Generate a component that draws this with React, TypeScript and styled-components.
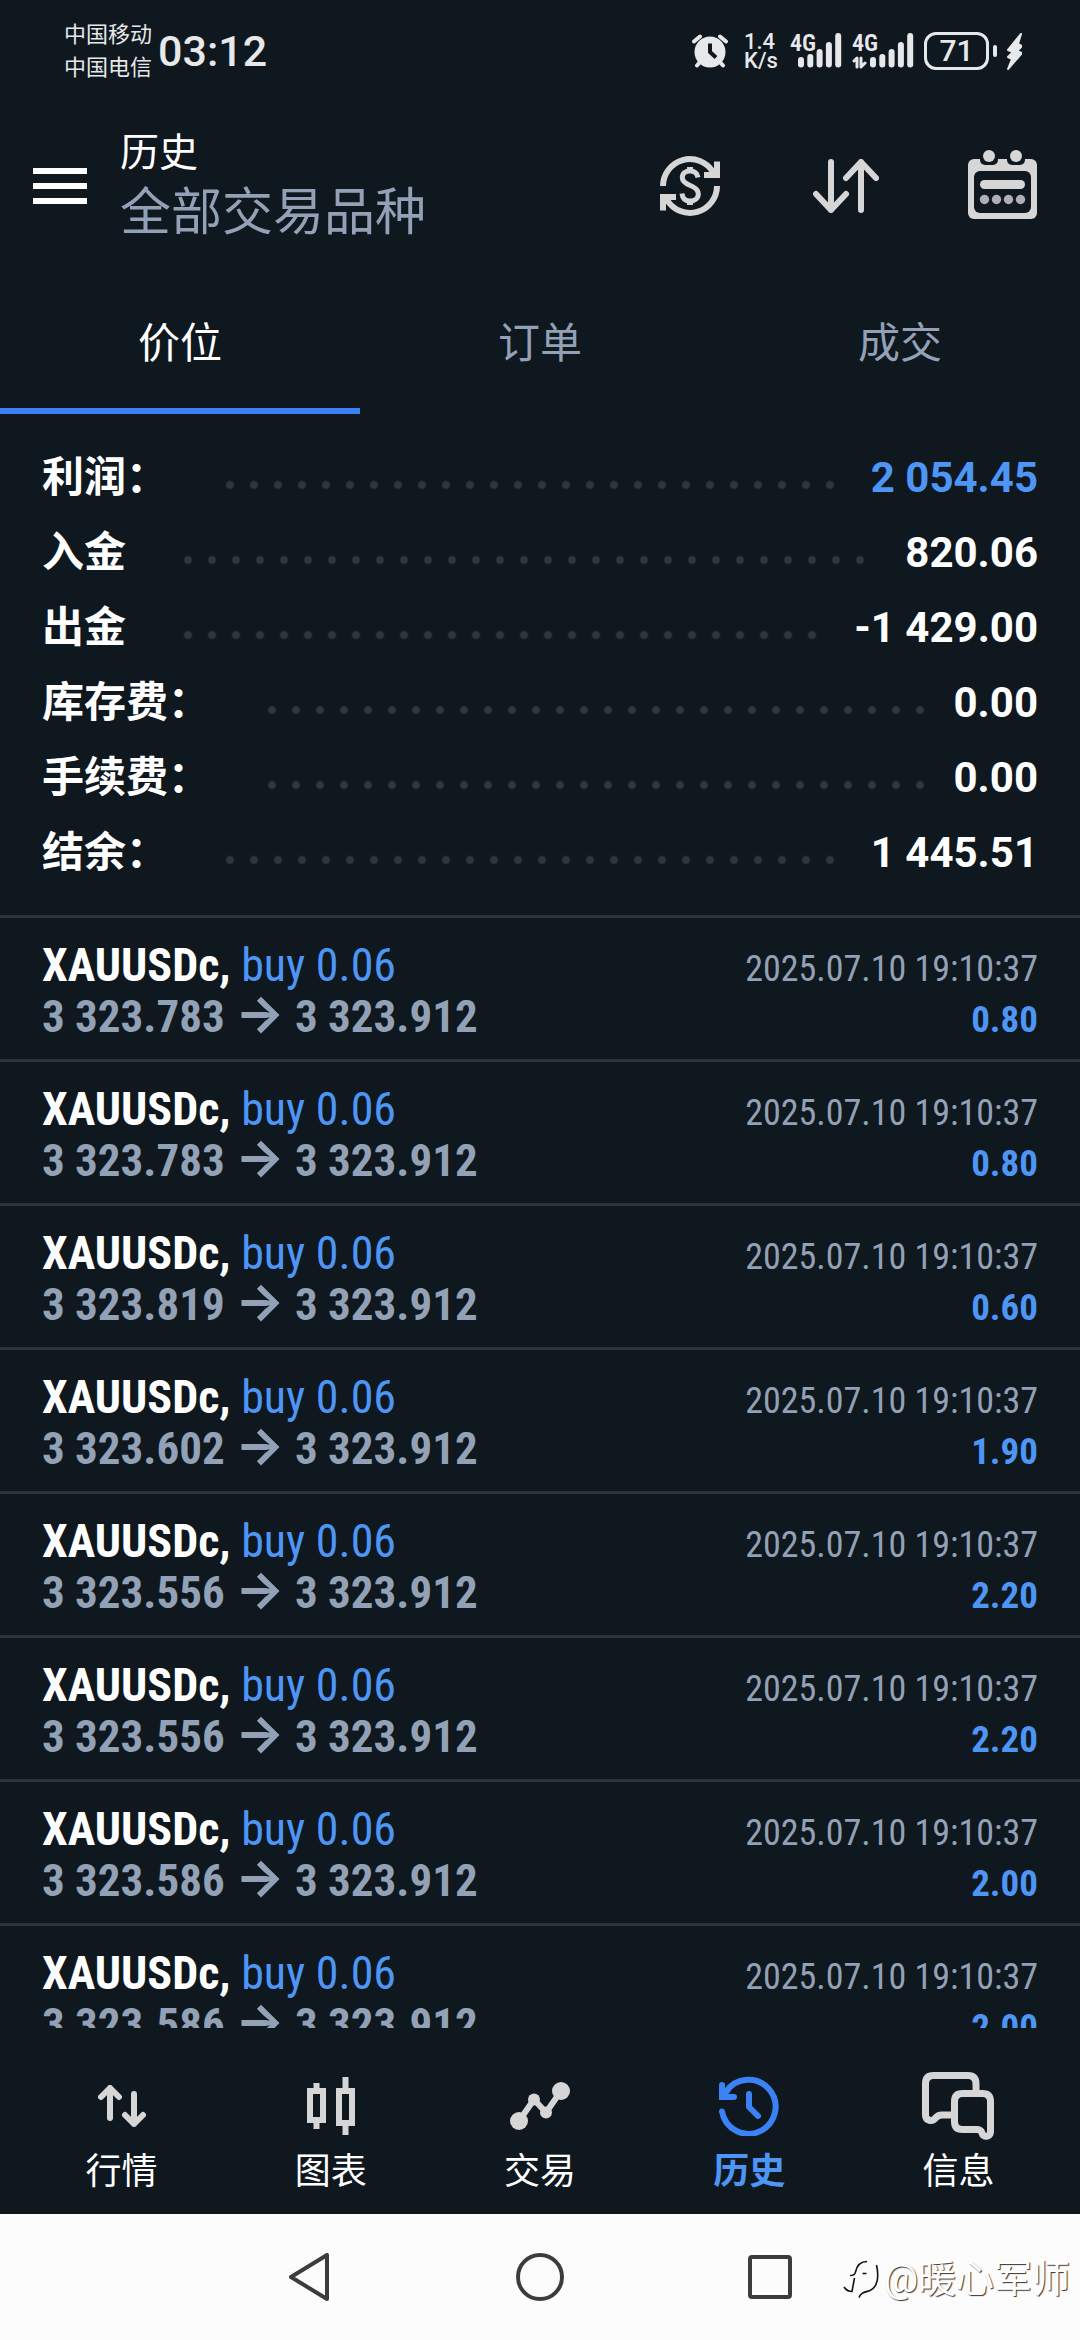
import React from "react";
import styled, { createGlobalStyle } from "styled-components";

const color = {
  bg: "#0f171f",
  line: "#2d343d",
  dot: "#2f363e",
  text: "#ffffff",
  muted: "#92a1b5",
  icon: "#d6d6d7",
  status: "#e6e8ea",
  accent: "#3b82f6",
  value: "#4d96f5",
};

const sans = `Roboto, "Noto Sans CJK SC", sans-serif`;
const condensed = `"Roboto Condensed", Roboto, "Noto Sans CJK SC", sans-serif`;

const GlobalStyle = createGlobalStyle`
  * { box-sizing: border-box; }
  body { margin: 0; background: ${color.bg}; }
  button { margin: 0; padding: 0; border: 0; background: none; color: inherit; font: inherit; cursor: pointer; }
  svg { display: block; flex: none; }
`;

const Screen = styled.div`
  display: flex;
  flex-direction: column;
  height: 100vh;
  background: ${color.bg};
  color: ${color.text};
  font-family: ${sans};
`;

/* Status bar */

const StatusBar = styled.div`
  flex: none;
  display: flex;
  align-items: center;
  justify-content: space-between;
  height: 102px;
  padding: 0 58px 0 64px;
  color: ${color.status};
`;

const StatusGroup = styled.div<{ $gap: number }>`
  display: flex;
  align-items: center;
  gap: ${(p) => p.$gap}px;
`;

const Carriers = styled.div`
  font-size: 22px;
  line-height: 33px;
`;

const Clock = styled.time`
  font-size: 43px;
  font-weight: 500;
  line-height: 54px;
`;

const AlarmBox = styled.span`
  width: 42px;
`;

const Speed = styled.div`
  width: 36px;
  font-size: 22px;
  font-weight: 500;
  line-height: 19px;
`;

const SignalBox = styled.span<{ $width: number }>`
  position: relative;
  width: ${(p) => p.$width}px;
  height: 36px;
`;

const SignalLabel = styled.span`
  position: absolute;
  top: 0;
  left: 0;
  font-family: ${condensed};
  font-size: 24px;
  font-weight: 600;
  line-height: 20px;
`;

const Battery = styled.span`
  display: flex;
  align-items: center;
  gap: 4px;
`;

const BatteryLevel = styled.span`
  width: 65px;
  height: 38px;
  border: 3px solid ${color.status};
  border-radius: 12px;
  font-size: 30px;
  font-weight: 500;
  line-height: 32px;
  text-align: center;
`;

const BatteryTip = styled.span`
  width: 4px;
  height: 12px;
  border-radius: 2px;
  background: ${color.status};
`;

/* Header */

const Header = styled.header`
  flex: none;
  display: flex;
  align-items: center;
  height: 168px;
  padding-left: 33px;
`;

const Titles = styled.div`
  flex: 1;
  padding-left: 33px;
`;

const Title = styled.h1`
  margin: 0;
  font-size: 39px;
  font-weight: 400;
  line-height: 54px;
`;

const Subtitle = styled.div`
  color: ${color.muted};
  font-size: 51px;
  line-height: 66px;
`;

const HeaderAction = styled.button`
  display: flex;
  justify-content: center;
  align-items: center;
  width: 156px;
  height: 156px;
`;

const Tabs = styled.nav`
  flex: none;
  display: grid;
  grid-template-columns: repeat(3, 1fr);
`;

const Tab = styled.button<{ $active?: boolean }>`
  height: 144px;
  border-bottom: 6px solid ${(p) => (p.$active ? color.accent : "transparent")};
  color: ${(p) => (p.$active ? color.text : color.muted)};
  font-size: 42px;
`;

/* Scrolling history */

const History = styled.main`
  flex: 1;
  min-height: 0;
  overflow-y: auto;
  scrollbar-width: none;
`;

const Summary = styled.dl`
  margin: 0;
  padding: 26px 42px 25px;
  border-bottom: 3px solid ${color.line};
  font-size: 42px;
  font-weight: 700;
  line-height: 75px;
`;

const SummaryRow = styled.div`
  display: flex;
  height: 75px;
`;

const SummaryLabel = styled.dt`
  white-space: nowrap;
`;

const Leader = styled.span`
  flex: 1;
  margin: 0 28px 0 50px;
  background: radial-gradient(circle at 12px 45px, ${color.dot} 3px, transparent 5px) 0 0 / 24px 75px repeat-x;
`;

const SummaryValue = styled.dd<{ $accent?: boolean }>`
  margin: 0;
  color: ${(p) => (p.$accent ? color.value : color.text)};
`;

const Deals = styled.ul`
  margin: 0;
  padding: 0;
  list-style: none;
  font-family: ${condensed};
`;

const Deal = styled.li`
  display: grid;
  grid-template-columns: 1fr auto;
  grid-auto-rows: 51px;
  align-items: baseline;
  padding: 22px 42px 17px;
  border-bottom: 3px solid ${color.line};
  line-height: 51px;
`;

const DealName = styled.span`
  font-size: 46px;
  font-weight: 700;
`;

const DealSide = styled.span`
  color: ${color.value};
  font-weight: 400;
`;

const DealPrices = styled.span`
  color: ${color.muted};
  font-size: 45px;
  font-weight: 700;
`;

const Arrow = styled.span`
  font-family: Inter, sans-serif;
  font-size: 52px;
  font-weight: 700;
  line-height: 0;
`;

const DealTime = styled.time`
  color: ${color.muted};
  font-size: 36px;
  text-align: right;
`;

const DealProfit = styled.span`
  color: ${color.value};
  font-size: 37px;
  font-weight: 700;
  text-align: right;
`;

/* Bottom bars */

const BottomNav = styled.nav`
  flex: none;
  display: grid;
  grid-template-columns: repeat(5, 1fr);
  padding: 42px 17px 12px;
`;

const NavItem = styled.button<{ $active?: boolean }>`
  color: ${(p) => (p.$active ? color.value : color.text)};
  font-size: 36px;
  font-weight: ${(p) => (p.$active ? 700 : 400)};
  line-height: 60px;
`;

const NavIcon = styled.span`
  display: flex;
  justify-content: center;
  align-items: center;
  height: 72px;
`;

const SystemNav = styled.footer`
  flex: none;
  position: relative;
  display: flex;
  justify-content: center;
  height: 126px;
  background: #fcfcfc;
`;

const SystemButton = styled.button`
  display: flex;
  justify-content: center;
  align-items: center;
  width: 230px;
`;

const Watermark = styled.div`
  position: absolute;
  right: 10px;
  bottom: 34px;
  display: flex;
  align-items: center;
  gap: 4px;
  color: #ffffff;
  font-size: 38px;
  line-height: 54px;
  text-shadow: 1px 1px 1px #333333;
`;

/* Icons */

const stroke = (c: string, w: number) => ({
  fill: "none",
  stroke: c,
  strokeWidth: w,
  strokeLinecap: "round" as const,
  strokeLinejoin: "round" as const,
});

const AlarmIcon = () => (
  <svg width="36" height="34" viewBox="0 0 36 34">
    <circle cx="18" cy="18" r="15.5" fill={color.status} />
    <path d="M8 28 5 31.500M28 28l3 3.500M2 7.500 8 2.500M34 7.500 28 2.500" {...stroke(color.status, 4)} />
    <path d="M18 9.500V18l6 5.500" {...stroke(color.bg, 4)} strokeLinecap="butt" />
  </svg>
);

function Signal({ data }: { data?: boolean }) {
  const x0 = data ? 18 : 8;
  const tops = [23, 20, 15, 8, -1];
  return (
    <SignalBox $width={data ? 62 : 52}>
      <svg width={data ? 62 : 52} height="36" viewBox={`0 -1 ${data ? 62 : 52} 36`}>
        {tops.map((t, i) => (
          <rect key={t} x={x0 + i * 9.3} y={t} width="6" height={33.5 - t} rx="3" fill={color.status} />
        ))}
        {data && <path d="M2 27l3-3v9M13 29l-4 4v-9" {...stroke(color.status, 3)} />}
      </svg>
      <SignalLabel>4G</SignalLabel>
    </SignalBox>
  );
}

const BoltIcon = () => (
  <svg width="15" height="37" viewBox="0 0 15 37">
    <path d="M14 1 1 17l5 2-5 5 4 2-4 10L15 20l-5-2 5-5-4-2z" fill={color.status} stroke={color.status} strokeWidth="2" strokeLinejoin="round" />
  </svg>
);

const MenuIcon = () => (
  <svg width="54" height="36" viewBox="0 0 54 36">
    <path d="M0 3h54M0 18h54M0 33h54" stroke={color.text} strokeWidth="6" />
  </svg>
);

const CurrencyIcon = () => {
  const half = (
    <>
      <path d="M3 30A27 27 0 0 1 53 16" fill="none" stroke={color.icon} strokeWidth="6" />
      <path d="M54 5.500h6V22H44v-6h6l4-3z" fill={color.icon} />
    </>
  );
  return (
    <svg width="60" height="60" viewBox="0 0 60 60">
      {half}
      <g transform="rotate(180 30 30)">{half}</g>
      <path
        d="M38 21.500C37.200 17 34 15 30 15c-4.500 0-7.700 2.600-7.700 6.500 0 4.300 3.700 6.300 8 8 4.600 1.800 8 4 8 8.500 0 4.200-3.500 7-8.300 7-4.500 0-7.500-2.500-8-7.500"
        fill="none"
        stroke={color.icon}
        strokeWidth="5"
      />
      <path d="M30 11v5M30 44v5" stroke={color.icon} strokeWidth="6" />
    </svg>
  );
};

const SortIcon = () => (
  <svg width="66" height="54" viewBox="0 0 66 54">
    <path d="M18 3v48M3 35l15 16 15-16M48 51V3M33 19 48 3l15 16" {...stroke(color.icon, 6)} />
  </svg>
);

const CalendarIcon = () => (
  <svg width="69" height="72" viewBox="0 0 69 72">
    <rect y="9" width="69" height="60" rx="6" fill={color.icon} />
    <rect x="6" y="21" width="57" height="42" rx="6" fill={color.bg} />
    <rect x="12" y="-4" width="18" height="19" rx="5" fill={color.bg} />
    <rect x="39" y="-4" width="18" height="19" rx="5" fill={color.bg} />
    <circle cx="21" cy="6" r="6" fill={color.icon} />
    <circle cx="48" cy="6" r="6" fill={color.icon} />
    <rect x="12" y="30" width="45" height="9" rx="4.500" fill={color.icon} />
    {[16.5, 28.5, 40.5, 52.5].map((x) => (
      <circle key={x} cx={x} cy="49.500" r="4.700" fill="#adafb3" />
    ))}
  </svg>
);

const QuotesIcon = () => (
  <svg width="48" height="42" viewBox="0 0 48 42">
    <path d="M12 33V3M3 12l9-9 9 9M36 9v30M27 30l9 9 9-9" {...stroke(color.icon, 6)} />
  </svg>
);

const ChartIcon = () => (
  <svg width="48" height="58" viewBox="0 0 48 58">
    <path d="M3 14h13v29H3zM32 14h13v32H32zM9.500 6v6M9.500 45v7M38.500 0v12M38.500 48v10" fill="none" stroke={color.icon} strokeWidth="6" />
  </svg>
);

const TradeIcon = () => (
  <svg width="60" height="48" viewBox="0 0 60 48">
    <path d="M9 39 24 17.500 36 30.500 51 9" {...stroke(color.icon, 6)} />
    <circle cx="9" cy="39" r="9" fill={color.icon} />
    <circle cx="24" cy="17.500" r="6" fill={color.icon} />
    <circle cx="36" cy="30.500" r="6" fill={color.icon} />
    <circle cx="51" cy="9" r="9" fill={color.icon} />
  </svg>
);

const HistoryIcon = () => (
  <svg width="60" height="60" viewBox="0 0 60 60">
    <path d="M3 35.500A27 27 0 1 0 7 16M30 18v13l9 9" {...stroke(color.accent, 6)} />
    <path d="M3 9v12h12" {...stroke(color.accent, 6)} strokeLinejoin="miter" />
    <path d="M3 12 12 21H3z" fill={color.accent} />
  </svg>
);

const MessagesIcon = () => (
  <svg width="72" height="68" viewBox="0 0 72 68">
    <path d="M54 20V12q0-8.500-8-8.500H11.500q-8 0-8 8V43c0 6 7 7 10 3 2-2.500 3.500-3 6.500-3h12" {...stroke(color.icon, 7)} />
    <path
      d="M40.500 21.500h20q8 0 8 8V60c0 5-7.500 6-8.500 1-1-3-2.500-3.500-5.500-3.500h-14q-8 0-8-8v-20q0-8 8-8z"
      {...stroke(color.icon, 7)}
      fill={color.bg}
    />
  </svg>
);

const system = stroke("#3c3c3c", 4);
const BackIcon = () => (
  <svg width="42" height="48" viewBox="0 0 42 48">
    <path d="M38 2v44L2 24z" {...system} />
  </svg>
);
const HomeIcon = () => (
  <svg width="48" height="48" viewBox="0 0 48 48">
    <circle cx="24" cy="24" r="22" {...system} />
  </svg>
);
const RecentIcon = () => (
  <svg width="44" height="44" viewBox="0 0 44 44">
    <rect x="2" y="2" width="40" height="40" rx="2" {...system} />
  </svg>
);

const WatermarkLogo = () => (
  <svg width="38" height="40" viewBox="0 0 38 40">
    <path d="M8 16.500q5 0 5.500-3.500C15 6 18 2.500 25 2.500M12.500 19 10 32.500Q5 32.500 2 28M20.500 14.500h4" fill="none" stroke="#111111" strokeWidth="1.600" />
    <path d="M34.500 6C37 17 36 28 28 31.500c-6 2-9 2-11 7" fill="none" stroke="#111111" strokeWidth="1.600" />
  </svg>
);

/* Data */

const summary = [
  { label: "利润：", value: "2 054.45", accent: true },
  { label: "入金", value: "820.06" },
  { label: "出金", value: "-1 429.00" },
  { label: "库存费：", value: "0.00" },
  { label: "手续费：", value: "0.00" },
  { label: "结余：", value: "1 445.51" },
];

const deals = [
  { open: "3 323.783", profit: "0.80" },
  { open: "3 323.783", profit: "0.80" },
  { open: "3 323.819", profit: "0.60" },
  { open: "3 323.602", profit: "1.90" },
  { open: "3 323.556", profit: "2.20" },
  { open: "3 323.556", profit: "2.20" },
  { open: "3 323.586", profit: "2.00" },
  { open: "3 323.586", profit: "2.00" },
];

const navItems = [
  { label: "行情", Icon: QuotesIcon },
  { label: "图表", Icon: ChartIcon },
  { label: "交易", Icon: TradeIcon },
  { label: "历史", Icon: HistoryIcon, active: true },
  { label: "信息", Icon: MessagesIcon },
];

export default function App() {
  return (
    <Screen>
      <GlobalStyle />
      <StatusBar>
        <StatusGroup $gap={6}>
          <Carriers>
            <div>中国移动</div>
            <div>中国电信</div>
          </Carriers>
          <Clock>03:12</Clock>
        </StatusGroup>
        <StatusGroup $gap={10}>
          <AlarmBox>
            <AlarmIcon />
          </AlarmBox>
          <Speed>
            <div>1.4</div>
            <div>K/s</div>
          </Speed>
          <Signal />
          <Signal data />
          <Battery>
            <BatteryLevel>71</BatteryLevel>
            <BatteryTip />
          </Battery>
          <BoltIcon />
        </StatusGroup>
      </StatusBar>

      <Header>
        <button aria-label="菜单">
          <MenuIcon />
        </button>
        <Titles>
          <Title>历史</Title>
          <Subtitle>全部交易品种</Subtitle>
        </Titles>
        <HeaderAction aria-label="货币">
          <CurrencyIcon />
        </HeaderAction>
        <HeaderAction aria-label="排序">
          <SortIcon />
        </HeaderAction>
        <HeaderAction aria-label="日期">
          <CalendarIcon />
        </HeaderAction>
      </Header>

      <Tabs>
        <Tab $active>价位</Tab>
        <Tab>订单</Tab>
        <Tab>成交</Tab>
      </Tabs>

      <History>
        <Summary>
          {summary.map((row) => (
            <SummaryRow key={row.label}>
              <SummaryLabel>{row.label}</SummaryLabel>
              <Leader />
              <SummaryValue $accent={row.accent}>{row.value}</SummaryValue>
            </SummaryRow>
          ))}
        </Summary>
        <Deals>
          {deals.map((deal, i) => (
            <Deal key={i}>
              <DealName>
                XAUUSDc, <DealSide>buy 0.06</DealSide>
              </DealName>
              <DealTime>2025.07.10 19:10:37</DealTime>
              <DealPrices>
                {deal.open} <Arrow>→</Arrow> 3 323.912
              </DealPrices>
              <DealProfit>{deal.profit}</DealProfit>
            </Deal>
          ))}
        </Deals>
      </History>

      <BottomNav>
        {navItems.map(({ label, Icon, active }) => (
          <NavItem key={label} $active={active}>
            <NavIcon>
              <Icon />
            </NavIcon>
            {label}
          </NavItem>
        ))}
      </BottomNav>

      <SystemNav>
        <SystemButton aria-label="返回">
          <BackIcon />
        </SystemButton>
        <SystemButton aria-label="主屏幕">
          <HomeIcon />
        </SystemButton>
        <SystemButton aria-label="最近任务">
          <RecentIcon />
        </SystemButton>
        <Watermark>
          <WatermarkLogo />
          <span>@暖心军师</span>
        </Watermark>
      </SystemNav>
    </Screen>
  );
}
